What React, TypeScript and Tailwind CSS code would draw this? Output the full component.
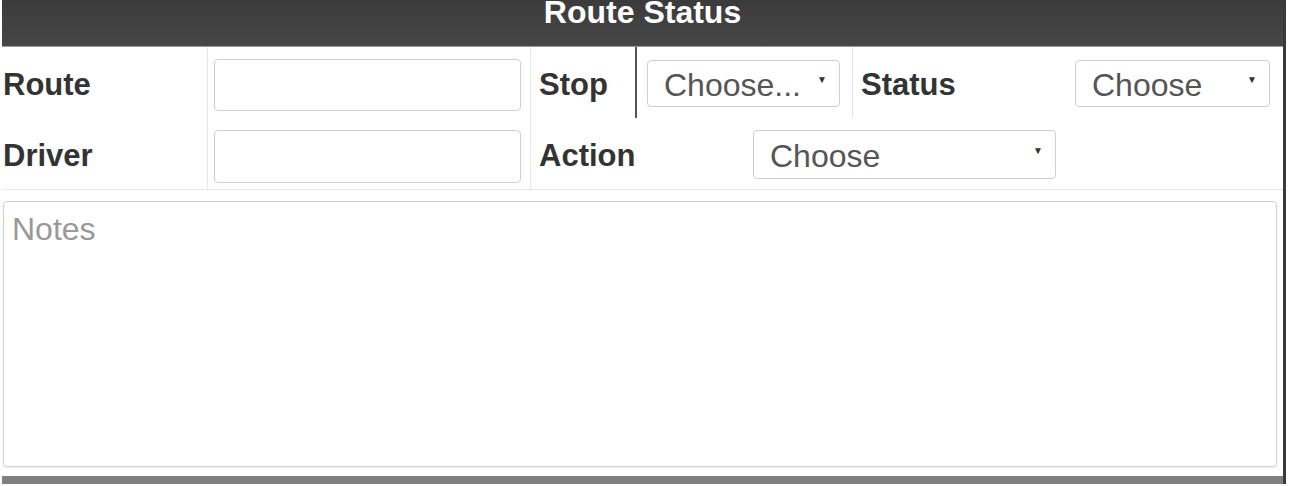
import React from "react";

// 선택 박스 (드롭다운)
const SelectBox: React.FC<{ label: string; className: string }> = ({
  label,
  className,
}) => (
  <div
    className={`flex items-center justify-between rounded-[4px] border border-[#cfcfcf] bg-white pl-[16px] pr-[12px] text-[32px] text-[#555] ${className}`}
  >
    <span className="mt-[2px] leading-none">{label}</span>
    <span className="mb-[8px] text-[10px] leading-none text-[#333]">▼</span>
  </div>
);

const Label: React.FC<{ text: string; className?: string }> = ({
  text,
  className = "",
}) => (
  <span
    className={`mt-[4px] text-[31px] font-bold leading-none text-[#333] ${className}`}
  >
    {text}
  </span>
);

const App: React.FC = () => {
  return (
    <div className="h-[486px] w-[1291px] bg-white font-['Liberation_Sans',Arial,sans-serif]">
      <div className="flex h-[484px] w-[1286px] flex-col border-r-[3px] border-[#3a3a3a] pl-[2px]">
        {/* 헤더 */}
        <div className="flex h-[47px] shrink-0 justify-center overflow-hidden border-b border-[#9a9a9a] bg-gradient-to-b from-[#3b3b3b] to-[#474747]">
          <span className="-mt-[4px] text-[32px] font-bold leading-none text-white">
            Route Status
          </span>
        </div>

        {/* 입력 행 */}
        <div className="flex border-b border-[#e6e6e6]">
          <div className="flex w-[206px] flex-col border-r border-[#e6e6e6]">
            <div className="flex h-[71px] items-center">
              <Label text="Route" className="pl-[1px]" />
            </div>
            <div className="flex h-[71px] items-center">
              <Label text="Driver" className="pl-[1px]" />
            </div>
          </div>

          <div className="flex w-[323px] flex-col border-r border-[#e6e6e6] pl-[6px]">
            <div className="flex h-[71px] items-start pt-[12px]">
              <div className="h-[52px] w-[307px] rounded-[4px] border border-[#cfcfcf]" />
            </div>
            <div className="flex h-[71px] items-start pt-[12px]">
              <div className="h-[53px] w-[307px] rounded-[4px] border border-[#cfcfcf]" />
            </div>
          </div>

          <div className="flex flex-1 flex-col">
            <div className="flex h-[71px]">
              <div className="flex w-[106px] items-center border-r-2 border-[#555] pl-[8px]">
                <Label text="Stop" />
              </div>
              <div className="flex w-[216px] items-start border-r border-[#e6e6e6] pl-[10px] pt-[13px]">
                <SelectBox label="Choose..." className="h-[47px] w-[193px]" />
              </div>
              <div className="flex w-[222px] items-center pl-[8px]">
                <Label text="Status" />
              </div>
              <div className="flex items-start pt-[13px]">
                <SelectBox label="Choose" className="h-[47px] w-[195px]" />
              </div>
            </div>
            <div className="flex h-[71px]">
              <div className="flex w-[222px] items-center pl-[8px]">
                <Label text="Action" />
              </div>
              <div className="flex items-start pt-[12px]">
                <SelectBox label="Choose" className="h-[49px] w-[303px]" />
              </div>
            </div>
          </div>
        </div>

        {/* 메모 */}
        <div className="pl-[1px] pr-[6px] pt-[11px]">
          <div className="h-[266px] rounded-[4px] border border-[#cfcfcf] px-[8px] pt-[11px] shadow-[0_1px_2px_rgba(0,0,0,0.08)]">
            <span className="text-[32px] leading-none text-[#999]">Notes</span>
          </div>
        </div>

        <div className="mt-auto h-[8px] bg-[#808080]" />
      </div>
    </div>
  );
};

export default App;
